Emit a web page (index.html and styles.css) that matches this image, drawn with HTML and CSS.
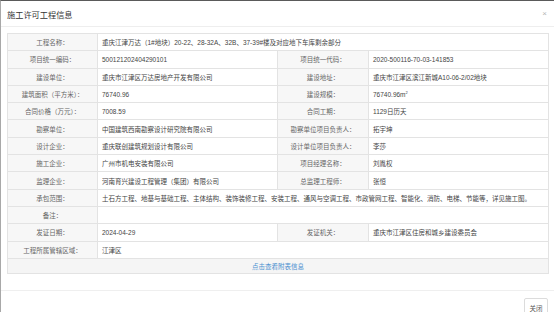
FILE: index.html
```html
<!DOCTYPE html>
<html lang="zh-CN">
<head>
    <meta charset="UTF-8">
    <meta name="viewport" content="width=device-width, initial-scale=1.0">
    <title>施工许可工程信息</title>
    <link rel="stylesheet" href="styles.css">
</head>
<body>
    <div class="modal">
        <header class="modal-header">
            <span class="modal-title">施工许可工程信息</span>
            <span class="modal-close">×</span>
        </header>
        <main class="modal-body">
            <table class="info-table">
                <colgroup>
                    <col class="col-label">
                    <col class="col-value">
                    <col class="col-label2">
                    <col class="col-value">
                </colgroup>
                <tr>
                    <td class="label">工程名称：</td>
                    <td class="value" colspan="3">重庆江津万达（1#地块）20-22、28-32A、32B、37-39#楼及对应地下车库剩余部分</td>
                </tr>
                <tr>
                    <td class="label">项目统一编码：</td>
                    <td class="value">500121202404290101</td>
                    <td class="label">项目统一代码：</td>
                    <td class="value">2020-500116-70-03-141853</td>
                </tr>
                <tr>
                    <td class="label">建设单位：</td>
                    <td class="value">重庆市江津区万达房地产开发有限公司</td>
                    <td class="label">建设地址：</td>
                    <td class="value">重庆市江津区滨江新城A10-06-2/02地块</td>
                </tr>
                <tr>
                    <td class="label">建筑面积（平方米）：</td>
                    <td class="value">76740.96</td>
                    <td class="label">建设规模：</td>
                    <td class="value">76740.96m<sup>2</sup></td>
                </tr>
                <tr>
                    <td class="label">合同价格（万元）：</td>
                    <td class="value">7008.59</td>
                    <td class="label">合同工期：</td>
                    <td class="value">1129日历天</td>
                </tr>
                <tr>
                    <td class="label">勘察单位：</td>
                    <td class="value">中国建筑西南勘察设计研究院有限公司</td>
                    <td class="label">勘察单位项目负责人：</td>
                    <td class="value">拓宇坤</td>
                </tr>
                <tr>
                    <td class="label">设计企业：</td>
                    <td class="value">重庆联创建筑规划设计有限公司</td>
                    <td class="label">设计单位项目负责人：</td>
                    <td class="value">李莎</td>
                </tr>
                <tr>
                    <td class="label">施工企业：</td>
                    <td class="value">广州市机电安装有限公司</td>
                    <td class="label">项目经理名称：</td>
                    <td class="value">刘胤权</td>
                </tr>
                <tr>
                    <td class="label">监理企业：</td>
                    <td class="value">河南育兴建设工程管理（集团）有限公司</td>
                    <td class="label">总监理工程师：</td>
                    <td class="value">张恒</td>
                </tr>
                <tr>
                    <td class="label">承包范围：</td>
                    <td class="value" colspan="3">土石方工程、地基与基础工程、主体结构、装饰装修工程、安装工程、通风与空调工程、市政管网工程、智能化、消防、电梯、节能等，详见施工图。</td>
                </tr>
                <tr>
                    <td class="label">备注：</td>
                    <td class="value" colspan="3"></td>
                </tr>
                <tr>
                    <td class="label">发证日期：</td>
                    <td class="value">2024-04-29</td>
                    <td class="label">发证机关：</td>
                    <td class="value">重庆市江津区住房和城乡建设委员会</td>
                </tr>
                <tr>
                    <td class="label">工程所属管辖区域：</td>
                    <td class="value" colspan="3">江津区</td>
                </tr>
                <tr class="link-row">
                    <td colspan="4"><a href="#" class="more-link">点击查看附表信息</a></td>
                </tr>
            </table>
        </main>
        <footer class="modal-footer">
            <button class="close-button">关闭</button>
        </footer>
    </div>
</body>
</html>
```

FILE: styles.css
```css
body {
    margin: 0;
    font-family: "Liberation Sans", "Noto Sans CJK SC", sans-serif;
    background-color: #fff;
    color: #333;
}

.modal {
    height: 312px;
    box-sizing: border-box;
    border-left: 1px solid #a8a8a8;
    border-top: 1px solid #5a5a5a;
    background-color: #fff;
    overflow: hidden;
}

.modal-header {
    display: flex;
    justify-content: space-between;
    align-items: center;
    height: 25px;
    padding: 0 6px 0 6px;
    border-bottom: 1px solid #eeeeee;
}

.modal-title {
    font-size: 8.2px;
    color: #333;
}

.modal-close {
    font-size: 8px;
    color: #b5b5b5;
    margin-right: 1px;
}

.modal-body {
    padding: 6px 6px 16px 6px;
}

.info-table {
    width: 541px;
    border-collapse: collapse;
    table-layout: fixed;
    border: 1px solid #e3e3e3;
    font-size: 6.5px;
}

.col-label {
    width: 90px;
}

.col-label2 {
    width: 91px;
}

.col-value {
    width: 180px;
}

.info-table tr {
    height: 17.3px;
}

.info-table td {
    border: 1px solid #e3e3e3;
    padding: 0 4px;
    white-space: nowrap;
    overflow: hidden;
}

.label {
    background-color: #f7f7f7;
    color: #666;
    text-align: center;
}

.value {
    color: #444;
}

.value sup {
    font-size: 4px;
}

.info-table .link-row {
    height: 15px;
}

.link-row td {
    background-color: #f5f5f5;
    text-align: center;
}

.more-link {
    color: #4a8fd0;
    text-decoration: none;
}

.modal-footer {
    display: flex;
    justify-content: flex-end;
    border-top: 1px solid #efefef;
    padding: 7px 6px 0 6px;
}

.close-button {
    width: 24px;
    height: 20px;
    padding: 0;
    border: 1px solid #dcdcdc;
    border-radius: 2px;
    background-color: #fff;
    color: #555;
    font-family: "Liberation Sans", "Noto Sans CJK SC", sans-serif;
    font-size: 6.5px;
}
```
